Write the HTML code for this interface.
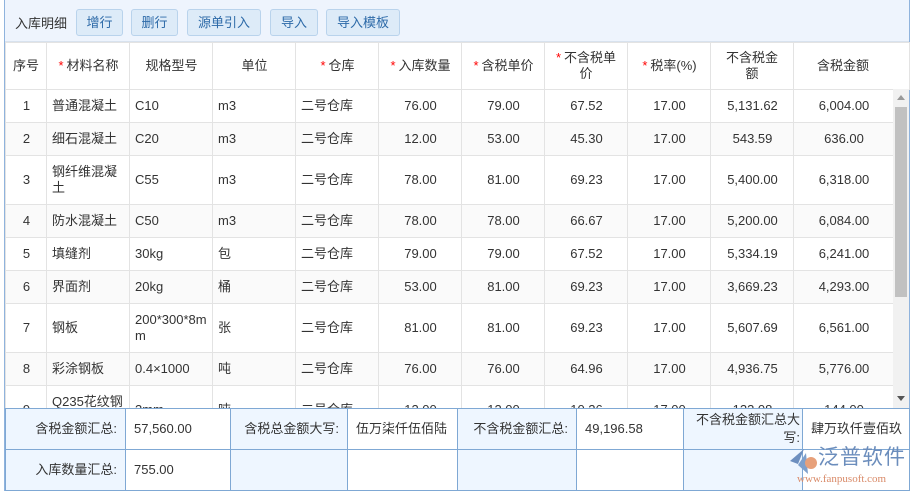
<!DOCTYPE html>
<html><head><meta charset="utf-8"><style>
*{box-sizing:border-box;margin:0;padding:0}
body{width:914px;height:491px;background:#fff;font-family:"Liberation Sans","Noto Sans CJK SC",sans-serif;font-size:13px;color:#333;position:relative;overflow:hidden}
.wrap{position:absolute;left:4px;top:0;width:906px;height:491px;border:1px solid #8fb3dd;border-top:none}
.tb{position:absolute;left:0;top:0;width:904px;height:42px;background:#eef4fd;border-bottom:1px solid #d8e2ee}
.tb span.t{position:absolute;left:10px;top:13px}
.btn{position:absolute;top:9px;height:27px;line-height:25px;border:1px solid #b9d3ec;background:#ddebf8;border-radius:3px;color:#2d6aa8;text-align:center}
table{border-collapse:collapse;table-layout:fixed;position:absolute;left:0}
td{border:1px solid #e3e3e3;padding:0 4px 0 5px;vertical-align:middle;line-height:16px;word-break:break-all}
.hd td{text-align:center;height:47px}
.s{color:#f00;margin-right:3px}
.c{text-align:center}
.body{position:absolute;left:0;top:89px;width:888px;height:319px;overflow:hidden}
.body tr:nth-child(even) td{background:#fafafa}
.sb{position:absolute;left:888px;top:89px;width:16px;height:319px;background:#f1f1f1}
.ft{position:absolute;left:0;top:408px}
.ft td{border:1px solid #7fa8d4;height:41px;padding:0 8px;white-space:nowrap;overflow:hidden}
.ft .l{background:#eef6ff;text-align:right}
</style></head><body>
<div class="wrap">
<div class="tb"><span class="t">入库明细</span>
<div class="btn" style="left:71px;width:47px">增行</div>
<div class="btn" style="left:126px;width:47px">删行</div>
<div class="btn" style="left:182px;width:74px">源单引入</div>
<div class="btn" style="left:265px;width:48px">导入</div>
<div class="btn" style="left:321px;width:74px">导入模板</div>
</div>
<table class="hd" style="top:42px;width:904px">
<colgroup><col style="width:41px"><col style="width:83px"><col style="width:83px"><col style="width:83px"><col style="width:83px"><col style="width:83px"><col style="width:83px"><col style="width:83px"><col style="width:83px"><col style="width:83px"><col style="width:116px"></colgroup>
<tr><td style="padding:0">序号</td><td><span class="s">*</span>材料名称</td><td>规格型号</td><td>单位</td><td><span class="s">*</span>仓库</td><td><span class="s">*</span>入库数量</td><td><span class="s">*</span>含税单价</td><td style="padding:0 8px"><span class="s">*</span>不含税单价</td><td><span class="s">*</span>税率(%)</td><td style="padding:0 14px">不含税金额</td><td style="padding-right:22px">含税金额</td></tr>
</table>
<div class="body"><table style="top:0;width:888px">
<colgroup><col style="width:41px"><col style="width:83px"><col style="width:83px"><col style="width:83px"><col style="width:83px"><col style="width:83px"><col style="width:83px"><col style="width:83px"><col style="width:83px"><col style="width:83px"><col style="width:100px"></colgroup>
<tr style="height:33px"><td class="c">1</td><td>普通混凝土</td><td>C10</td><td>m3</td><td>二号仓库</td><td class="c">76.00</td><td class="c">79.00</td><td class="c">67.52</td><td class="c">17.00</td><td class="c">5,131.62</td><td class="c">6,004.00</td></tr>
<tr style="height:33px"><td class="c">2</td><td>细石混凝土</td><td>C20</td><td>m3</td><td>二号仓库</td><td class="c">12.00</td><td class="c">53.00</td><td class="c">45.30</td><td class="c">17.00</td><td class="c">543.59</td><td class="c">636.00</td></tr>
<tr style="height:49px"><td class="c">3</td><td>钢纤维混凝土</td><td>C55</td><td>m3</td><td>二号仓库</td><td class="c">78.00</td><td class="c">81.00</td><td class="c">69.23</td><td class="c">17.00</td><td class="c">5,400.00</td><td class="c">6,318.00</td></tr>
<tr style="height:33px"><td class="c">4</td><td>防水混凝土</td><td>C50</td><td>m3</td><td>二号仓库</td><td class="c">78.00</td><td class="c">78.00</td><td class="c">66.67</td><td class="c">17.00</td><td class="c">5,200.00</td><td class="c">6,084.00</td></tr>
<tr style="height:33px"><td class="c">5</td><td>填缝剂</td><td>30kg</td><td>包</td><td>二号仓库</td><td class="c">79.00</td><td class="c">79.00</td><td class="c">67.52</td><td class="c">17.00</td><td class="c">5,334.19</td><td class="c">6,241.00</td></tr>
<tr style="height:33px"><td class="c">6</td><td>界面剂</td><td>20kg</td><td>桶</td><td>二号仓库</td><td class="c">53.00</td><td class="c">81.00</td><td class="c">69.23</td><td class="c">17.00</td><td class="c">3,669.23</td><td class="c">4,293.00</td></tr>
<tr style="height:49px"><td class="c">7</td><td>钢板</td><td>200*300*8m<br>m</td><td>张</td><td>二号仓库</td><td class="c">81.00</td><td class="c">81.00</td><td class="c">69.23</td><td class="c">17.00</td><td class="c">5,607.69</td><td class="c">6,561.00</td></tr>
<tr style="height:33px"><td class="c">8</td><td>彩涂钢板</td><td>0.4×1000</td><td>吨</td><td>二号仓库</td><td class="c">76.00</td><td class="c">76.00</td><td class="c">64.96</td><td class="c">17.00</td><td class="c">4,936.75</td><td class="c">5,776.00</td></tr>
<tr style="height:49px"><td class="c">9</td><td>Q235花纹钢<br>板</td><td>3mm</td><td>吨</td><td>二号仓库</td><td class="c">12.00</td><td class="c">12.00</td><td class="c">10.26</td><td class="c">17.00</td><td class="c">123.08</td><td class="c">144.00</td></tr>
</table></div>
<div class="sb"><div style="position:absolute;left:4px;top:6px;border:4px solid transparent;border-bottom:5px solid #999;border-top:none"></div><div style="position:absolute;left:2px;top:18px;width:12px;height:190px;background:#c1c1c1"></div><div style="position:absolute;left:4px;top:307px;border:4px solid transparent;border-top:5px solid #555;border-bottom:none"></div></div>
<table class="ft" style="width:904px">
<colgroup><col style="width:120px"><col style="width:105px"><col style="width:117px"><col style="width:110px"><col style="width:119px"><col style="width:107px"><col style="width:119px"><col style="width:107px"></colgroup>
<tr><td class="l">含税金额汇总:</td><td>57,560.00</td><td class="l">含税总金额大写:</td><td>伍万柒仟伍佰陆</td><td class="l">不含税金额汇总:</td><td>49,196.58</td><td class="l" style="line-height:18px;white-space:normal;padding:0 2px">不含税金额汇总大写:</td><td>肆万玖仟壹佰玖</td></tr>
<tr><td class="l">入库数量汇总:</td><td>755.00</td><td class="l"></td><td></td><td class="l"></td><td></td><td class="l"></td><td></td></tr>
</table>
</div>
<div style="position:absolute;left:786px;top:447px;width:40px;height:30px">
<svg width="40" height="30"><path d="M4 14 L18 2 L12 17 Z" fill="#6d8fbf"/><path d="M12 18 L20 6 L22 27 Z" fill="#7ea0cc"/><circle cx="25" cy="16" r="6" fill="#e7a07a"/></svg></div>
<div style="position:absolute;left:818px;top:445px;font-size:21px;line-height:26px;color:#6b8dbc;letter-spacing:1px;white-space:nowrap">泛普软件</div>
<div style="position:absolute;left:797px;top:473px;font-size:11px;line-height:13px;color:#d98a68;font-family:'Liberation Serif',serif;white-space:nowrap">www.fanpusoft.com</div>
</body></html>
